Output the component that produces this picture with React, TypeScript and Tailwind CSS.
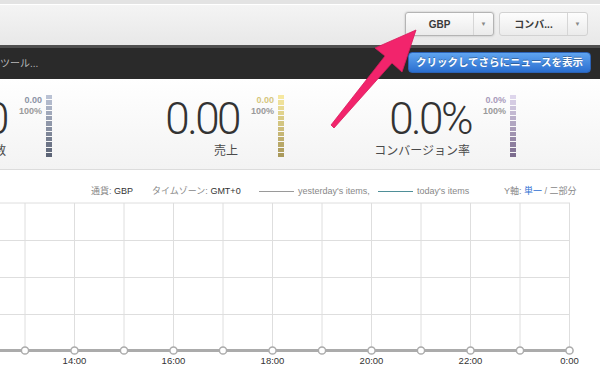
import React from "react";

const ticks = [25, 74.5, 124, 173.5, 223, 272.5, 322, 371.5, 421, 470.5, 520, 569.5];
const labels: [number, string][] = [
  [74.5, "14:00"],
  [173.5, "16:00"],
  [272.5, "18:00"],
  [371.5, "20:00"],
  [470.5, "22:00"],
  [569.5, "0:00"],
];

type Rgb = [number, number, number];

const stats: {
  value: string;
  label: string;
  top: string;
  topColor: string;
  from: Rgb;
  to: Rgb;
}[] = [
  { value: "0", label: "注文数", top: "0.00", topColor: "text-[#8c94a6]", from: [186, 194, 212], to: [92, 100, 118] },
  { value: "0.00", label: "売上", top: "0.00", topColor: "text-[#d6c77e]", from: [246, 232, 160], to: [170, 154, 92] },
  { value: "0.0%", label: "コンバージョン率", top: "0.0%", topColor: "text-[#a99bbb]", from: [222, 214, 236], to: [124, 108, 142] },
];

function mix(a: Rgb, b: Rgb, t: number) {
  const c = a.map((v, i) => Math.round(v + (b[i] - v) * t));
  return `rgb(${c[0]},${c[1]},${c[2]})`;
}

function Bar({ from, to }: { from: Rgb; to: Rgb }) {
  const n = 12;
  return (
    <div className="flex w-[6px] flex-col gap-[1px]">
      {Array.from({ length: n }).map((_, i) => (
        <div key={i} className="h-[4.25px] w-full" style={{ backgroundColor: mix(from, to, i / (n - 1)) }} />
      ))}
    </div>
  );
}

function SelectButton({ label, active }: { label: string; active?: boolean }) {
  return (
    <div
      className={
        "flex h-[24px] w-[89px] overflow-hidden rounded-[3px] border bg-gradient-to-b from-[#fdfdfd] to-[#ebebeb] " +
        (active ? "border-[#b4b4b4] shadow-[0_0_2px_rgba(0,0,0,0.25)]" : "border-[#d2d2d2]")
      }
    >
      <div className="flex flex-1 items-center justify-center text-[10px] font-bold text-[#3a3a3a]">{label}</div>
      <div className="flex w-[20px] items-center justify-center border-l border-[#d6d6d6] text-[6px] text-[#888]">▼</div>
    </div>
  );
}

export default function App() {
  return (
    <div className="relative h-[368px] w-[600px] overflow-hidden bg-white font-['Liberation_Sans','Noto_Sans_CJK_JP',sans-serif]">
      {/* top toolbar */}
      <div className="h-[5px] border-b border-white bg-[#e3e3e3]" />
      <div className="flex h-[40px] items-start justify-end gap-[5px] bg-gradient-to-b from-[#f4f4f4] to-[#e8e8e8] pr-[12px] pt-[7px]">
        <SelectButton label="GBP" active />
        <SelectButton label="コンバ..." />
      </div>

      {/* news bar */}
      <div className="flex h-[34px] items-start justify-between border-t-[3px] border-[#4f4f4f] bg-[#2a2a2a] pr-[9px] pt-[4px]">
        <span className="mt-[6px] text-[10px] leading-[12px] text-[#b8b8b8]">ツール...</span>
        <button className="h-[21px] w-[183px] rounded-[4px] border border-[#2b62b6] bg-gradient-to-b from-[#5fa4ef] to-[#2b6fd0] text-[10.5px] font-bold leading-[19px] text-white [text-shadow:0_-1px_0_rgba(0,0,0,0.3)]">
          クリックしてさらにニュースを表示
        </button>
      </div>

      {/* stats */}
      <div className="flex h-[91px] border-b border-[#dcdcdc] bg-gradient-to-b from-white to-[#f3f3f3]">
        <div className="ml-[-180px] flex">
          {stats.map((s) => (
            <div key={s.label} className="flex w-[232px] items-start justify-end pt-[16px]">
              <div className="mr-[3px] flex flex-col items-end">
                <span className="mt-[2px] font-['Roboto'] text-[44px] font-light leading-[44px] tracking-[-2.5px] text-[#333]">
                  {s.value}
                </span>
                <span className="mt-[3px] pr-[1px] text-[12px] leading-[14px] text-[#4a4a4a]">{s.label}</span>
              </div>
              <div className="flex w-[32px] flex-col items-end text-[9px] font-bold leading-[11px]">
                <span className={s.topColor}>{s.top}</span>
                <span className="text-[#9a9a9a]">100%</span>
              </div>
              <div className="ml-[4px]">
                <Bar from={s.from} to={s.to} />
              </div>
            </div>
          ))}
        </div>
      </div>

      {/* legend */}
      <div className="flex h-[29px] items-start pt-[16px] text-[9px] leading-[11px] text-[#888]">
        <span className="ml-[91px] w-[61px] whitespace-nowrap">
          通貨: <span className="text-[#333]">GBP</span>
        </span>
        <span className="w-[107px] whitespace-nowrap">
          タイムゾーン: <span className="text-[#333]">GMT+0</span>
        </span>
        <span className="mr-[4px] mt-[5px] h-[1px] w-[35px] bg-[#9a9a9a]" />
        <span className="w-[80px] whitespace-nowrap">yesterday's items,</span>
        <span className="mr-[4px] mt-[5px] h-[1px] w-[35px] bg-[#4f8f98]" />
        <span className="w-[87px] whitespace-nowrap">today's items</span>
        <span className="whitespace-nowrap">
          Y軸: <span className="text-[#2f6fd3]">単一</span> / 二部分
        </span>
      </div>

      {/* chart */}
      <svg width="600" height="168" viewBox="0 200 600 168" className="block">
        {[204, 241.5, 278.5, 315.5].map((y) => (
          <line key={y} x1="0" x2="570" y1={y} y2={y} stroke="#dedede" strokeWidth="1" />
        ))}
        {ticks.map((x) => (
          <line key={x} x1={x} x2={x} y1="204" y2="351" stroke="#dedede" strokeWidth="1" />
        ))}
        <line x1="0" x2="570" y1="351.5" y2="351.5" stroke="#ababab" strokeWidth="3" />
        {ticks.map((x) => (
          <circle key={"c" + x} cx={x} cy="351.5" r="3.6" fill="#fff" stroke="#ababab" strokeWidth="1.5" />
        ))}
        {labels.map(([x, t]) => (
          <text key={t} x={x} y="365" textAnchor="middle" fontSize="9.5" fill="#333" fontFamily="Liberation Sans, sans-serif">
            {t}
          </text>
        ))}
      </svg>

      {/* annotation arrow */}
      <svg className="pointer-events-none absolute left-0 top-0" width="600" height="368">
        <polygon
          points="416,30 402,72 392,63 334,128 331,125 385,56 375,48"
          fill="#f2246c"
          stroke="#d81a5c"
          strokeWidth="0.8"
          strokeLinejoin="round"
        />
      </svg>
    </div>
  );
}
